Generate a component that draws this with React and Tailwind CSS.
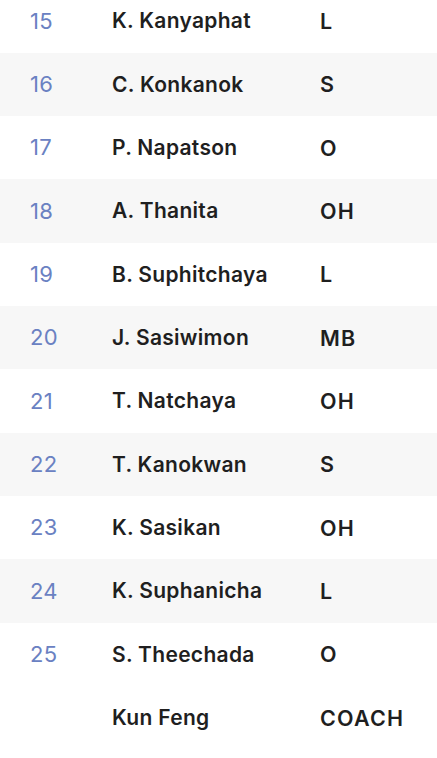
export default function App() {
  const rows = [
    ["15", "K. Kanyaphat", "L"],
    ["16", "C. Konkanok", "S"],
    ["17", "P. Napatson", "O"],
    ["18", "A. Thanita", "OH"],
    ["19", "B. Suphitchaya", "L"],
    ["20", "J. Sasiwimon", "MB"],
    ["21", "T. Natchaya", "OH"],
    ["22", "T. Kanokwan", "S"],
    ["23", "K. Sasikan", "OH"],
    ["24", "K. Suphanicha", "L"],
    ["25", "S. Theechada", "O"],
    ["", "Kun Feng", "COACH"],
  ];
  return (
    <div className="w-[437px] h-[758px] overflow-hidden bg-white" style={{ fontFamily: "Inter, 'Noto Sans', sans-serif" }}>
      <div className="mt-[-10.6px] flex flex-col">
        {rows.map((r, i) => (
          <div
            key={i}
            className={`flex items-center h-[63.33px] ${i % 2 === 1 && i < 11 ? "bg-[#f7f7f7]" : "bg-white"}`}
          >
            <div className="w-[112px] pl-[30px] text-[22px] font-normal text-[#6a81c2] tracking-[0.3px]">{r[0]}</div>
            <div className="w-[208px] text-[21px] font-semibold text-[#1f1f1f] tracking-[0.3px]">{r[1]}</div>
            <div className="text-[21.5px] font-semibold text-[#1f1f1f] tracking-[1.2px]">{r[2]}</div>
          </div>
        ))}
      </div>
    </div>
  );
}
